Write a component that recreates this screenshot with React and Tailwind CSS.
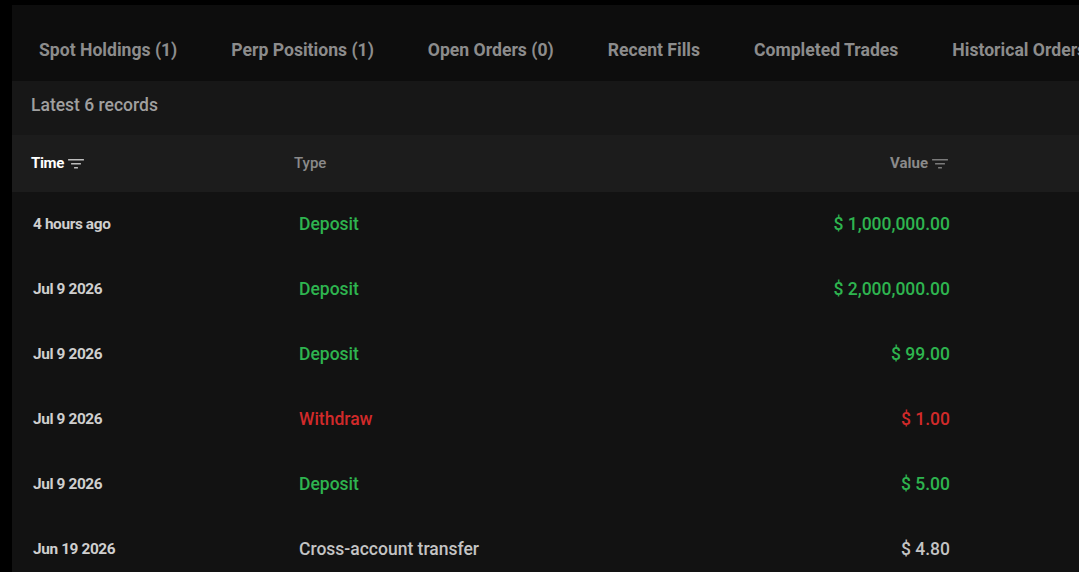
const tabs = [
  'Spot Holdings (1)',
  'Perp Positions (1)',
  'Open Orders (0)',
  'Recent Fills',
  'Completed Trades',
  'Historical Orders',
]

const records = [
  { time: '4 hours ago', type: 'Deposit', value: '$ 1,000,000.00', tone: 'in' },
  { time: 'Jul 9 2026', type: 'Deposit', value: '$ 2,000,000.00', tone: 'in' },
  { time: 'Jul 9 2026', type: 'Deposit', value: '$ 99.00', tone: 'in' },
  { time: 'Jul 9 2026', type: 'Withdraw', value: '$ 1.00', tone: 'out' },
  { time: 'Jul 9 2026', type: 'Deposit', value: '$ 5.00', tone: 'in' },
  { time: 'Jun 19 2026', type: 'Cross-account transfer', value: '$ 4.80', tone: 'neutral' },
]

const toneClass = {
  in: 'text-[#2eb44f]',
  out: 'text-[#d12a2a]',
  neutral: 'text-[#c4c4c4]',
}

// Icono de ordenar: tres líneas que se estrechan
function SortIcon({ className = '' }) {
  return (
    <svg width="16" height="12" viewBox="0 0 16 12" className={className} fill="currentColor">
      <rect x="0" y="1" width="16" height="1.5" rx="0.5" />
      <rect x="3" y="5" width="10" height="1.5" rx="0.5" />
      <rect x="6" y="9" width="4" height="1.5" rx="0.5" />
    </svg>
  )
}

export default function App() {
  return (
    <div
      className="flex h-[572px] w-[1079px] overflow-hidden bg-black pt-[5px] pl-[12px]"
      style={{ fontFamily: 'Roboto, "Liberation Sans", sans-serif' }}
    >
      <div className="flex min-w-0 flex-1 flex-col bg-[#121212]">
        <nav className="flex h-[76px] shrink-0 items-center gap-[54px] overflow-hidden bg-[#0d0d0d] pt-[14px] pl-[27px] whitespace-nowrap">
          {tabs.map((tab) => (
            <span key={tab} className="text-[17.6px] font-bold text-[#8c8c8c]">
              {tab}
            </span>
          ))}
        </nav>

        <div className="flex h-[54px] shrink-0 items-center bg-[#171717] pb-[6px] pl-[19px] text-[17.5px] font-medium text-[#a0a0a0]">
          Latest 6 records
        </div>

        <div className="flex h-[57px] shrink-0 items-center bg-[#1c1c1c] pr-[131px] pl-[19px] text-[15px]">
          <div className="flex w-[263px] items-center gap-1 font-bold tracking-tight text-white">
            Time <SortIcon className="text-[#bdbdbd]" />
          </div>
          <div className="flex-1 font-medium text-[#8a8a8a]">Type</div>
          <div className="flex items-center gap-1 font-bold text-[#8a8a8a]">
            Value <SortIcon className="text-[#7a7a7a]" />
          </div>
        </div>

        {records.map((r, i) => (
          <div key={i} className="flex h-[65px] shrink-0 items-center pr-[129px] pl-[21px]">
            <div className="w-[266px] text-[15.4px] font-bold tracking-tight text-[#cfcfcf]">{r.time}</div>
            <div className={`flex-1 text-[17.5px] font-medium ${toneClass[r.tone]}`}>{r.type}</div>
            <div className={`text-[17.5px] font-medium ${toneClass[r.tone]}`}>{r.value}</div>
          </div>
        ))}
      </div>
    </div>
  )
}
